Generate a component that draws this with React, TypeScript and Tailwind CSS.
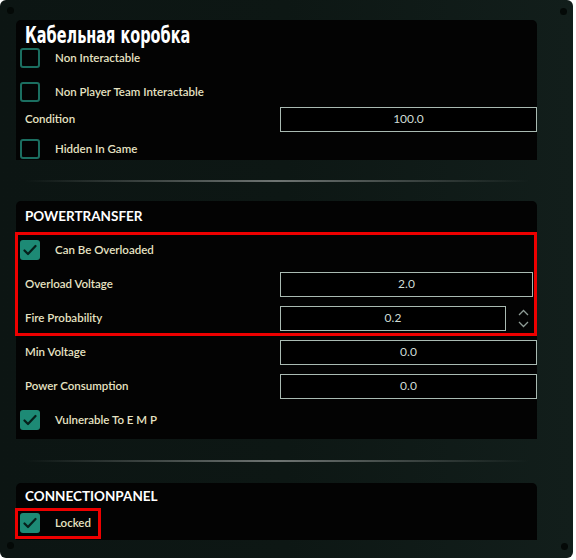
import type { ReactNode } from 'react';

const labelFont = { fontFamily: 'Lato, "Open Sans", sans-serif' };

function Check({ checked }: { checked?: boolean }) {
  if (checked) {
    return (
      <div className="flex h-5 w-5 items-center justify-center rounded-[3px] bg-[#1d8a75]">
        <svg width="14" height="12" viewBox="0 0 14 12" fill="none">
          <path d="M1.5 6.5 L5 10 L12.5 2" stroke="#06201b" strokeWidth="2.2" strokeLinecap="round" strokeLinejoin="round" />
        </svg>
      </div>
    );
  }
  return <div className="h-5 w-5 rounded-[3px] border-2 border-[#1b6e60]" />;
}

function CheckRow({ label, checked, className = '' }: { label: string; checked?: boolean; className?: string }) {
  return (
    <div className={`flex items-center pl-[4px] ${className}`}>
      <Check checked={checked} />
      <span className="ml-[15px] text-[11.5px] font-semibold text-[#e6e2c2]">{label}</span>
    </div>
  );
}

function NumRow({
  label,
  value,
  width = 'w-[257px]',
  spinner,
  className = '',
}: {
  label: string;
  value: string;
  width?: string;
  spinner?: boolean;
  className?: string;
}) {
  return (
    <div className={`flex items-center pl-[9px] ${className}`}>
      <span className="w-[255px] text-[11.5px] font-semibold text-[#e6e2c2]">{label}</span>
      <div className={`flex h-[25px] ${width} items-center justify-center border border-[#a9bab2] bg-black text-[12px] text-[#cfdcd5]`}>
        {value}
      </div>
      {spinner && (
        <div className="ml-[12px] flex flex-col items-center gap-[5px]">
          <svg width="11" height="7" viewBox="0 0 11 7" fill="none">
            <path d="M1 6 L5.5 1.5 L10 6" stroke="#8e9c96" strokeWidth="1.3" />
          </svg>
          <svg width="11" height="7" viewBox="0 0 11 7" fill="none">
            <path d="M1 1 L5.5 5.5 L10 1" stroke="#8e9c96" strokeWidth="1.3" />
          </svg>
        </div>
      )}
    </div>
  );
}

function Panel({ children, className = '' }: { children: ReactNode; className?: string }) {
  return <div className={`relative w-[521px] rounded-t-[5px] bg-[#030303] ${className}`}>{children}</div>;
}

function Separator({ className = '' }: { className?: string }) {
  return (
    <div className={`flex items-center ${className}`}>
      <div className="ml-[8px] h-[2px] w-[505px] bg-gradient-to-r from-transparent via-[#6e7472] to-transparent" />
    </div>
  );
}

function Screw({ className }: { className: string }) {
  return <div className={`absolute h-[7px] w-[7px] rounded-full bg-[#040907] ${className}`} />;
}

export default function App() {
  return (
    <div className="h-[560px] w-[576px] bg-white" style={labelFont}>
      <div className="relative h-[558px] w-[573px] rounded-[6px] bg-gradient-to-r from-[#0c1513] via-[#0d1714] to-[#121e1b] pl-[16px] pt-[20px]">
        <Screw className="left-[7px] top-[7px]" />
        <Screw className="right-[6px] top-[8px]" />
        <Screw className="bottom-[9px] left-[7px]" />
        <Screw className="bottom-[8px] right-[5px]" />

        {/* Item header */}
        <Panel className="h-[140px]">
          <div className="flex h-[30px] items-center pl-[9px]">
            <h1
              className="origin-left scale-x-[0.7] text-[23px] font-bold leading-none text-white"
              style={{ fontFamily: '"DejaVu Sans Condensed", "DejaVu Sans", sans-serif' }}
            >
              Кабельная коробка
            </h1>
          </div>
          <CheckRow label="Non Interactable" className="-mt-[2px] h-5" />
          <CheckRow label="Non Player Team Interactable" className="mt-[14px] h-5" />
          <NumRow label="Condition" value="100.0" className="mt-[5px] h-[24px]" />
          <CheckRow label="Hidden In Game" className="mt-[8px] h-5" />
        </Panel>

        <Separator className="h-[41px]" />

        {/* PowerTransfer */}
        <Panel className="h-[238px]">
          <div className="flex h-[31px] items-center pl-[9px]">
            <h2 className="text-[13.5px] font-bold text-white">POWERTRANSFER</h2>
          </div>
          <CheckRow label="Can Be Overloaded" checked className="mt-[1px] h-[34px]" />
          <NumRow label="Overload Voltage" value="2.0" width="w-[253px]" className="h-[34px]" />
          <NumRow label="Fire Probability" value="0.2" width="w-[226px]" spinner className="h-[34px]" />
          <NumRow label="Min Voltage" value="0.0" className="h-[34px]" />
          <NumRow label="Power Consumption" value="0.0" className="h-[34px]" />
          <CheckRow label="Vulnerable To E M P" checked className="h-[34px]" />
          <div className="pointer-events-none absolute left-[-1px] top-[31px] h-[104px] w-[522px] border-[3px] border-[#ee0000]" />
        </Panel>

        <Separator className="h-[44px]" />

        {/* ConnectionPanel */}
        <Panel className="h-[57px]">
          <div className="flex h-[26px] items-center pl-[9px]">
            <h2 className="text-[13.5px] font-bold text-white">CONNECTIONPANEL</h2>
          </div>
          <CheckRow label="Locked" checked className="h-[28px]" />
          <div className="pointer-events-none absolute left-[-1px] top-[25px] h-[31px] w-[86px] border-[3px] border-[#ee0000]" />
        </Panel>
      </div>
    </div>
  );
}
